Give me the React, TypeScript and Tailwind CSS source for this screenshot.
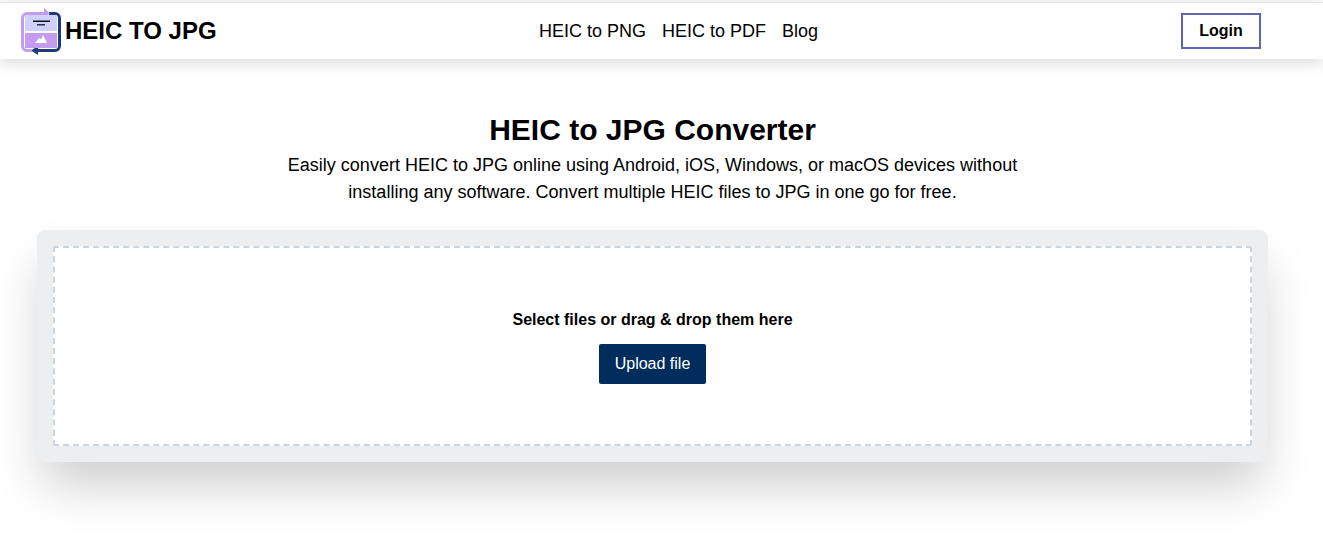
export default function App() {
  return (
    <div className="min-h-[543px] overflow-hidden bg-white font-['Liberation_Sans',Arial,sans-serif] text-black">
      <div className="h-[2px] bg-[#fafafa]" />
      <header className="relative flex h-[57px] items-center border-t border-[#e6e6e6] bg-white pl-[21px] pr-[62px] shadow-[0_4px_14px_rgba(0,0,0,0.15)]">
        <div className="flex w-[518px] items-center gap-[4px]">
          <svg width="40" height="47" viewBox="0 0 40 47" fill="none">
            <path d="M28 5.5H34a4.5 4.5 0 0 1 4.5 4.5V38a4.5 4.5 0 0 1-4.5 4.5H15" stroke="#1f3a7d" strokeWidth="3" />
            <path d="M17 38L10 42.5L17 47Z" fill="#1f3a7d" />
            <path d="M24 5.5H6a4.5 4.5 0 0 0-4.5 4.5V38a4.5 4.5 0 0 0 4.5 4.5H11" stroke="#c39cf0" strokeWidth="3" />
            <path d="M23 0L29 5.5L23 9Z" fill="#c39cf0" />
            <rect x="4" y="7" width="32" height="16" fill="#cfd0fb" />
            <rect x="4" y="25" width="32" height="15" fill="#c39cf0" />
            <rect x="12" y="12.5" width="17" height="1.5" fill="#111" />
            <rect x="16" y="16" width="8" height="1.5" fill="#333" />
            <path d="M14 35L18 30L20 31.5L22 27L26 35Z" fill="#fff" />
          </svg>
          <span className="text-2xl leading-none font-bold">HEIC TO JPG</span>
        </div>
        <nav className="flex gap-4 text-lg leading-none">
          <a>HEIC to PNG</a>
          <a>HEIC to PDF</a>
          <a>Blog</a>
        </nav>
        <button className="ml-auto h-9 w-20 border-2 border-[#6464ae] bg-white text-base font-bold">Login</button>
      </header>
      <main className="flex flex-col items-center pl-[37px] pr-[55px] pt-[53px]">
        <h1 className="text-[30px] leading-[36px] font-bold">HEIC to JPG Converter</h1>
        <p className="mt-[4px] w-[740px] text-center text-lg leading-[27px]">
          Easily convert HEIC to JPG online using Android, iOS, Windows, or macOS devices without installing any software. Convert multiple HEIC files to JPG in one go for free.
        </p>
        <section className="mt-[24px] w-full rounded-lg bg-[#eceef0] p-4 shadow-[0_28px_50px_-6px_rgba(0,0,0,0.2)]">
          <div className="flex h-[200px] flex-col items-center justify-center rounded-[2px] border-2 border-dashed border-[#c8d4e0] bg-white">
            <p className="text-base leading-6 font-bold">Select files or drag &amp; drop them here</p>
            <button className="mt-[12px] h-10 w-[107px] rounded-[2px] bg-[#002d5b] text-base text-white">Upload file</button>
          </div>
        </section>
      </main>
    </div>
  );
}
